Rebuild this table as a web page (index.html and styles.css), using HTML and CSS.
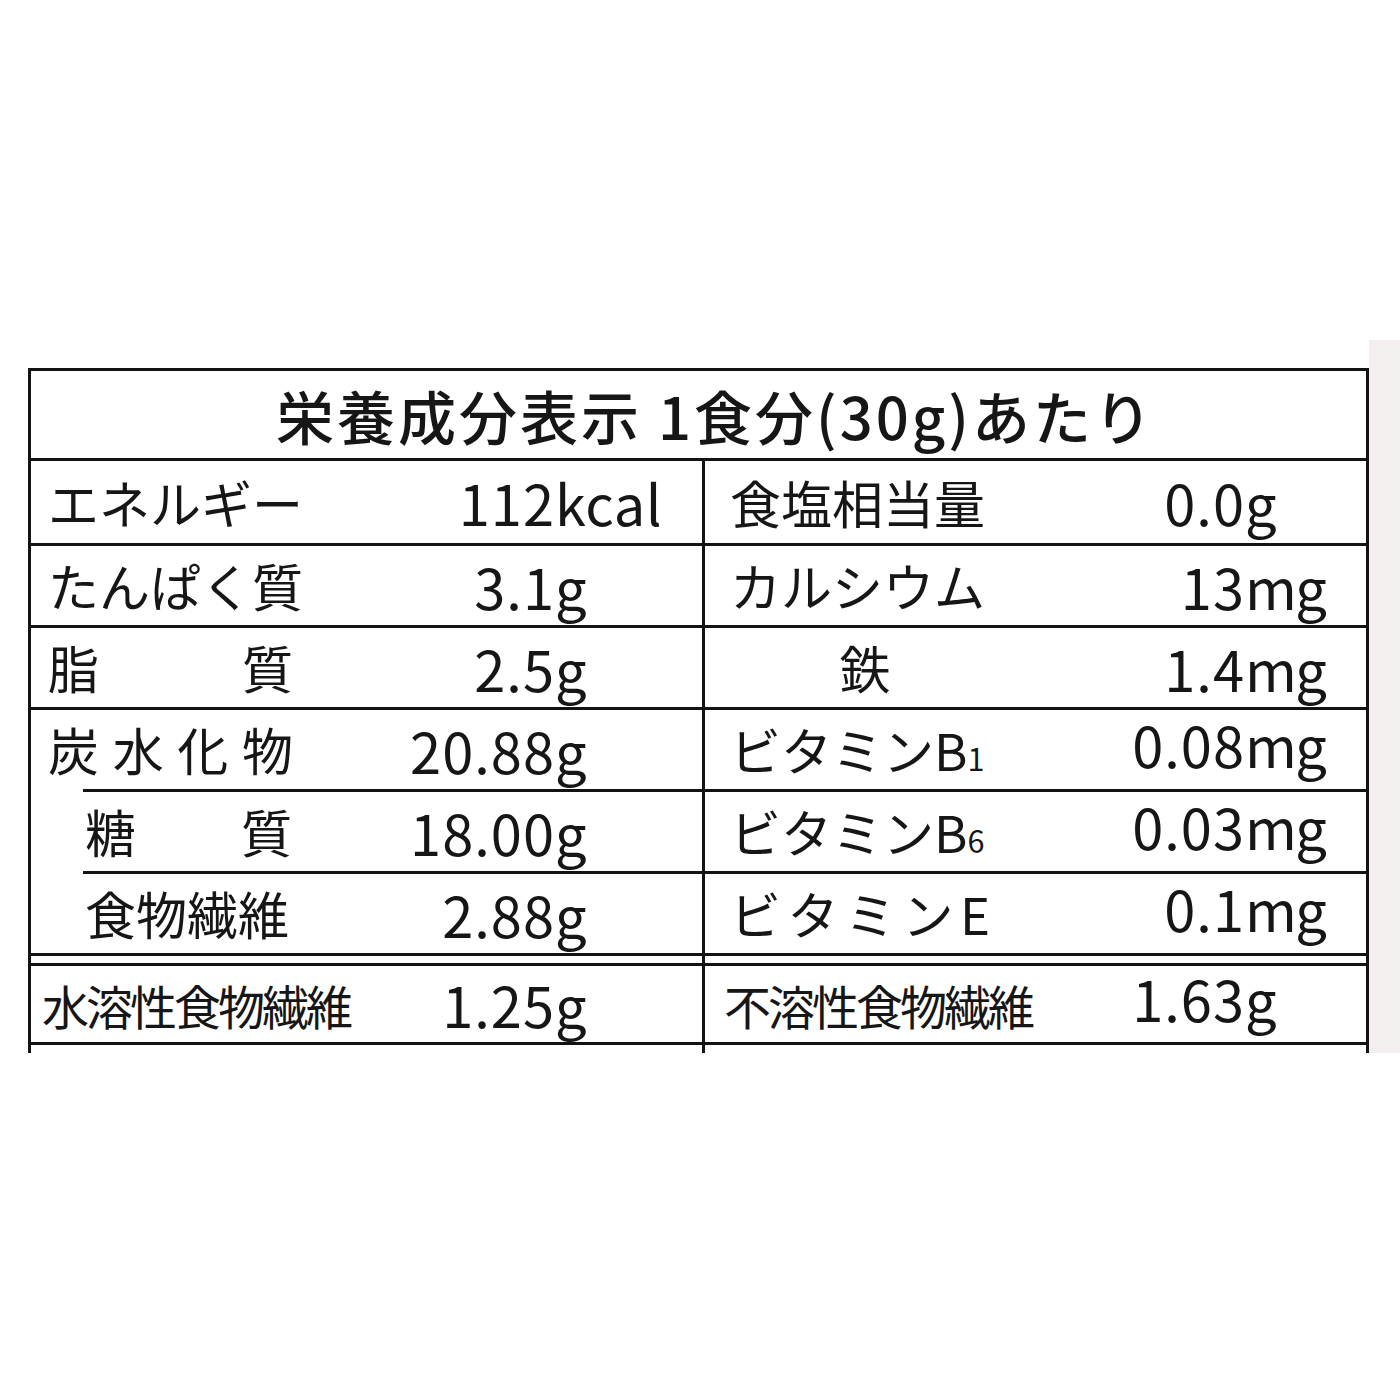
FILE: index.html
```html
<!DOCTYPE html>
<html lang="ja">
<head>
<meta charset="utf-8">
<title>栄養成分表示</title>
<link rel="stylesheet" href="styles.css">
</head>
<body>
<div class="photo">
  <div class="panel">
    <div class="title">栄養成分表示 1食分(30g)あたり</div>
    <div class="grid">
      <div class="cell"><span class="lbl">エネルギー</span><span class="num">112</span><span class="unit">kcal</span></div>
      <div class="cell cell--r"><span class="lbl">食塩相当量</span><span class="num">0.0</span><span class="unit">g</span></div>

      <div class="cell cell--line"><span class="lbl">たんぱく質</span><span class="num">3.1</span><span class="unit">g</span></div>
      <div class="cell cell--r cell--line"><span class="lbl">カルシウム</span><span class="num">13</span><span class="unit unit--mg">mg</span></div>

      <div class="cell cell--line"><span class="lbl spread">脂質</span><span class="num">2.5</span><span class="unit">g</span></div>
      <div class="cell cell--r cell--line"><span class="lbl lbl--center">鉄</span><span class="num">1.4</span><span class="unit unit--mg">mg</span></div>

      <div class="cell cell--line"><span class="lbl spread">炭水化物</span><span class="num">20.88</span><span class="unit">g</span></div>
      <div class="cell cell--r cell--line cell--up"><span class="lbl">ビタミンB<span class="sub">1</span></span><span class="num">0.08</span><span class="unit unit--mg">mg</span></div>

      <div class="cell cell--line cell--sub"><span class="lbl spread spread--sub">糖質</span><span class="num">18.00</span><span class="unit">g</span></div>
      <div class="cell cell--r cell--line cell--up"><span class="lbl">ビタミンB<span class="sub">6</span></span><span class="num">0.03</span><span class="unit unit--mg">mg</span></div>

      <div class="cell cell--line cell--sub"><span class="lbl">食物繊維</span><span class="num">2.88</span><span class="unit">g</span></div>
      <div class="cell cell--r cell--line cell--up"><span class="lbl spread spread--e">ビタミンE</span><span class="num">0.1</span><span class="unit unit--mg">mg</span></div>
    </div>
    <div class="grid grid--fiber">
      <div class="cell cell--fiber"><span class="lbl lbl--tight">水溶性食物繊維</span><span class="num">1.25</span><span class="unit">g</span></div>
      <div class="cell cell--r cell--fiber cell--up"><span class="lbl lbl--tight">不溶性食物繊維</span><span class="num">1.63</span><span class="unit">g</span></div>
    </div>
    <div class="grid grid--tail">
      <div class="tail-left"></div>
      <div></div>
    </div>
  </div>
</div>
</body>
</html>
```

FILE: styles.css
```css
html, body {
  margin: 0;
  padding: 0;
  background: #ffffff;
}

body {
  font-family: "Noto Sans CJK JP", "Noto Sans", sans-serif;
  color: #161616;
}

.photo {
  margin-top: 340px;
  height: 713px;
  box-sizing: border-box;
  padding: 28px 0 0 28px;
  overflow: hidden;
  background: linear-gradient(90deg, #ffffff 1369px, #f3efef 1369px);
}

.panel {
  width: 1341px;
  height: 685px;
  box-sizing: border-box;
  border: 3px solid #131313;
  border-bottom: 0;
  display: flex;
  flex-direction: column;
}

.title {
  height: 90px;
  box-sizing: border-box;
  border-bottom: 3px solid #131313;
  display: flex;
  align-items: center;
  justify-content: center;
  padding-left: 34px;
  font-size: 58px;
  font-weight: 500;
  letter-spacing: 3px;
  line-height: 1;
  white-space: nowrap;
}

.grid {
  display: grid;
  grid-template-columns: 674px 1fr;
  grid-auto-rows: 82px;
}

.cell {
  box-sizing: border-box;
  border-right: 3px solid #131313;
  display: grid;
  grid-template-columns: 255px 252px auto;
  align-items: center;
  padding-left: 17px;
  line-height: 1;
  white-space: nowrap;
}

.cell--r {
  border-right: 0;
  padding-left: 25px;
  grid-template-columns: 262px 253px auto;
}

.cell--line {
  border-top: 3px solid #131313;
}

.cell--sub {
  margin-left: 52px;
  padding-left: 2px;
  grid-template-columns: 218px 252px auto;
}

.lbl {
  font-size: 51px;
  display: block;
}

.spread {
  width: 245px;
  text-align: justify;
  text-align-last: justify;
}

.spread--sub {
  width: 207px;
}

.spread--e {
  width: 260px;
}

.lbl--center {
  width: 270px;
  text-align: center;
}

.lbl--tight {
  font-size: 47px;
  letter-spacing: -3px;
  margin-left: -6px;
}

.sub {
  font-size: 0.6em;
  letter-spacing: 0;
}

.num {
  font-size: 56px;
  letter-spacing: 1px;
  text-align: right;
}

.unit {
  font-size: 56px;
  letter-spacing: 0.5px;
}

.unit--mg {
  letter-spacing: -1.5px;
}

.cell--up .num,
.cell--up .unit {
  margin-bottom: 12px;
}

.grid--fiber {
  grid-auto-rows: 92px;
}

.cell--fiber {
  border-top: 3px solid #131313;
  border-bottom: 3px solid #131313;
  padding-top: 10px;
  background: linear-gradient(180deg, transparent 7px, #131313 7px, #131313 10px, transparent 10px);
}

.grid--tail {
  flex: 1;
  grid-auto-rows: 1fr;
}

.tail-left {
  border-right: 3px solid #131313;
}
```
